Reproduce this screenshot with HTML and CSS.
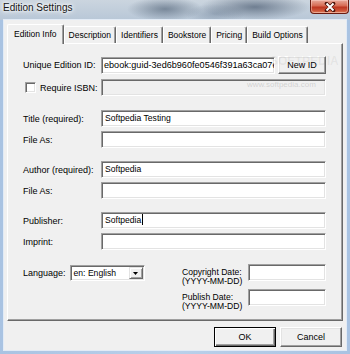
FILE: index.html
```html
<!DOCTYPE html>
<html>
<head>
  <title>Edition Settings</title>
  <link rel="stylesheet" href="styles.css">
</head>
<body>
<div class="window">
  <div class="titlebar">
    <span class="title">Edition Settings</span>
    <div class="close">
      <svg width="12" height="10" viewBox="0 0 12 10">
        <path d="M2.5 1.5 L9.5 8.5 M9.5 1.5 L2.5 8.5" stroke="#4a1208" stroke-width="3.6" stroke-linecap="round"/>
        <path d="M2.5 1.5 L9.5 8.5 M9.5 1.5 L2.5 8.5" stroke="#fff" stroke-width="2"/>
      </svg>
    </div>
  </div>

  <div class="client">
    <div class="tabs">
      <div class="tab active">Edition Info</div>
      <div class="tab">Description</div>
      <div class="tab">Identifiers</div>
      <div class="tab">Bookstore</div>
      <div class="tab">Pricing</div>
      <div class="tab">Build Options</div>
    </div>

    <div class="panel">
      <div class="row">
        <span class="lbl">Unique Edition ID:</span>
        <div class="field id-field">ebook:guid-3ed6b960fe0546f391a63ca07e2c1d94</div>
        <button class="btn new-id">New ID</button>
      </div>
      <div class="row isbn-row">
        <span class="lbl check-lbl"><span class="checkbox"></span>Require ISBN:</span>
        <div class="field disabled"></div>
      </div>

      <div class="row group-top">
        <span class="lbl">Title (required):</span>
        <div class="field">Softpedia Testing</div>
      </div>
      <div class="row pair">
        <span class="lbl">File As:</span>
        <div class="field"></div>
      </div>

      <div class="row group">
        <span class="lbl">Author (required):</span>
        <div class="field">Softpedia</div>
      </div>
      <div class="row pair">
        <span class="lbl">File As:</span>
        <div class="field"></div>
      </div>

      <div class="row group">
        <span class="lbl">Publisher:</span>
        <div class="field">Softpedia<span class="caret"></span></div>
      </div>
      <div class="row pair">
        <span class="lbl">Imprint:</span>
        <div class="field"></div>
      </div>

      <div class="bottom">
        <div class="lang-row">
          <span class="lang-lbl">Language:</span>
          <div class="select">
            <span class="select-text">en: English</span>
            <span class="select-arrow">
              <svg width="5" height="3" viewBox="0 0 5 3"><path d="M0 0 H5 L2.5 3 Z" fill="#000"/></svg>
            </span>
          </div>
        </div>
        <div class="dates">
          <div class="date-row">
            <span class="date-lbl">Copyright Date:<br>(YYYY-MM-DD)</span>
            <div class="field date-field"></div>
          </div>
          <div class="date-row publish">
            <span class="date-lbl">Publish Date:<br>(YYYY-MM-DD)</span>
            <div class="field date-field"></div>
          </div>
        </div>
      </div>
    </div>

    <div class="buttons">
      <button class="btn default">OK</button>
      <button class="btn">Cancel</button>
    </div>
  </div>

  <div class="watermark">
    <span class="wm-big">SOFTPEDIA</span>
    <span class="wm-small">www.softpedia.com</span>
  </div>
</div>
</body>
</html>
```

FILE: styles.css
```css
body {
  margin: 0;
  font-family: "Liberation Sans", Arial, sans-serif;
  color: #000;
}

.window {
  position: relative;
  width: 350px;
  height: 354px;
  display: flex;
  flex-direction: column;
  overflow: hidden;
  background: linear-gradient(90deg, #a9c3e2, #b9d0ea 50%, #a9c3e2);
}

/* title bar (aero glass) */
.titlebar {
  height: 20px;
  flex: none;
  display: flex;
  justify-content: space-between;
  align-items: flex-start;
  background:
    radial-gradient(ellipse 38px 12px at 165px 9px, rgba(60, 78, 100, 0.55), transparent),
    radial-gradient(ellipse 55px 13px at 255px 7px, rgba(55, 72, 95, 0.6), transparent),
    radial-gradient(ellipse 30px 10px at 215px 14px, rgba(80, 100, 125, 0.35), transparent),
    linear-gradient(#cbd5df, #b8c7d7);
}

.title {
  font-size: 10px;
  line-height: 14px;
  padding: 1px 0 0 3px;
  color: #161616;
  text-shadow: 0 0 3px #fff, 0 0 5px #fff, 0 0 7px #fff;
}

.close {
  width: 39px;
  height: 14px;
  margin-right: 1px;
  box-sizing: border-box;
  border: 1px solid #6a1c10;
  border-top: 0;
  border-radius: 0 0 4px 4px;
  background: linear-gradient(#e8aa9b, #d66a52 45%, #bd3620 55%, #cf5a3c 85%, #e08a64);
  box-shadow: inset 0 0 0 1px rgba(255, 220, 210, 0.45);
  display: flex;
  align-items: center;
  justify-content: center;
}

/* client area */
.client {
  flex: 1;
  margin: 0 4px 4px 4px;
  padding: 4px 3px 0 3px;
  background: #f0f0f0;
  box-shadow: 0 0 0 1px #e2ebf6;
}

.tabs {
  display: flex;
  align-items: flex-end;
  height: 19px;
}

.tab {
  box-sizing: border-box;
  height: 17px;
  padding: 0 4px;
  font-size: 8.5px;
  line-height: 16px;
  white-space: nowrap;
  background: #f0f0f0;
  border: 1px solid;
  border-color: #fff #696969 transparent #fff;
  border-bottom: 0;
  border-radius: 2px 2px 0 0;
  box-shadow: inset -1px 0 #a0a0a0;
}

.tab.active {
  position: relative;
  z-index: 1;
  height: 20px;
  margin-bottom: -1px;
  padding: 0 6px;
  line-height: 18px;
}

.panel {
  box-sizing: border-box;
  height: 278px;
  padding: 12px 16px 0 15px;
  border: 1px solid;
  border-color: #fff #696969 #696969 #fff;
  box-shadow: inset -1px -1px #a0a0a0;
}

.row {
  display: flex;
  align-items: center;
}

.isbn-row { margin-top: 5px; }
.group-top { margin-top: 14px; }
.group { margin-top: 13px; }
.pair { margin-top: 4px; }

.lbl {
  width: 78px;
  flex: none;
  font-size: 9px;
  white-space: nowrap;
}

.check-lbl {
  display: flex;
  align-items: center;
}

.checkbox {
  box-sizing: border-box;
  width: 11px;
  height: 11px;
  margin: 0 4px 0 2px;
  background: #fff;
  border: 1px solid;
  border-color: #a0a0a0 #fff #fff #a0a0a0;
  box-shadow: inset 1px 1px #696969, inset -1px -1px #e3e3e3;
}

.field {
  flex: 1;
  min-width: 0;
  box-sizing: border-box;
  height: 17px;
  padding: 0 3px;
  font-size: 8.6px;
  line-height: 15px;
  white-space: nowrap;
  overflow: hidden;
  background: #fff;
  border: 1px solid;
  border-color: #a0a0a0 #fff #fff #a0a0a0;
  box-shadow: inset 1px 1px #696969, inset -1px -1px #e3e3e3;
}

.id-field {
  padding-left: 2px;
  font-size: 9.1px;
}

.field.disabled {
  background: #f0f0f0;
}

.caret {
  display: inline-block;
  width: 1px;
  height: 11px;
  margin-left: 1px;
  vertical-align: -2px;
  background: #000;
}

.btn {
  box-sizing: border-box;
  height: 20px;
  padding: 0;
  font-family: inherit;
  font-size: 9px;
  color: #000;
  background: #f0f0f0;
  border: 1px solid;
  border-color: #fff #696969 #696969 #fff;
  box-shadow: inset -1px -1px #a0a0a0, inset 1px 1px #e3e3e3;
}

.new-id {
  width: 48px;
  height: 18px;
  margin-left: 3px;
  flex: none;
}

/* language + dates */
.bottom {
  display: flex;
  align-items: flex-start;
  margin-top: 14px;
}

.lang-row {
  display: flex;
  align-items: center;
  margin-top: 1px;
}

.lang-lbl {
  font-size: 9px;
}

.select {
  box-sizing: border-box;
  width: 75px;
  height: 16px;
  margin-left: 4px;
  display: flex;
  align-items: center;
  padding: 1px;
  background: #fff;
  border: 1px solid;
  border-color: #a0a0a0 #fff #fff #a0a0a0;
  box-shadow: inset 1px 1px #696969, inset -1px -1px #e3e3e3;
}

.select-text {
  flex: 1;
  padding-left: 2px;
  font-size: 8.6px;
  line-height: 12px;
}

.select-arrow {
  box-sizing: border-box;
  width: 14px;
  height: 12px;
  display: flex;
  align-items: center;
  justify-content: center;
  background: #f0f0f0;
  border: 1px solid;
  border-color: #e3e3e3 #696969 #696969 #e3e3e3;
  box-shadow: inset 1px 1px #fff, inset -1px -1px #a0a0a0;
}

.dates {
  margin-left: auto;
  width: 144px;
}

.date-row {
  display: flex;
  align-items: flex-start;
}

.date-row.publish {
  margin-top: 3px;
}

.date-lbl {
  width: 66px;
  flex: none;
  padding-top: 4px;
  font-size: 8.6px;
  line-height: 9px;
  white-space: nowrap;
}

.date-field {
  flex: none;
  width: 78px;
}

.buttons {
  display: flex;
  justify-content: flex-end;
  gap: 4px;
  margin-top: 6px;
  padding-right: 1px;
}

.buttons .btn {
  width: 62px;
}

.btn.default {
  border-color: #000;
  box-shadow: inset 1px 1px #fff, inset -1px -1px #696969, inset -2px -2px #a0a0a0;
}

/* site watermark over the screenshot */
.watermark {
  position: absolute;
  left: 224px;
  top: 54px;
  display: flex;
  flex-direction: column;
  align-items: center;
  pointer-events: none;
}

.wm-big {
  margin-left: 46px;
  font-size: 12px;
  font-weight: bold;
  line-height: 14px;
  color: rgba(120, 120, 120, 0.1);
}

.wm-small {
  margin-top: 12px;
  font-size: 8px;
  line-height: 10px;
  color: rgba(150, 150, 150, 0.35);
}
```
